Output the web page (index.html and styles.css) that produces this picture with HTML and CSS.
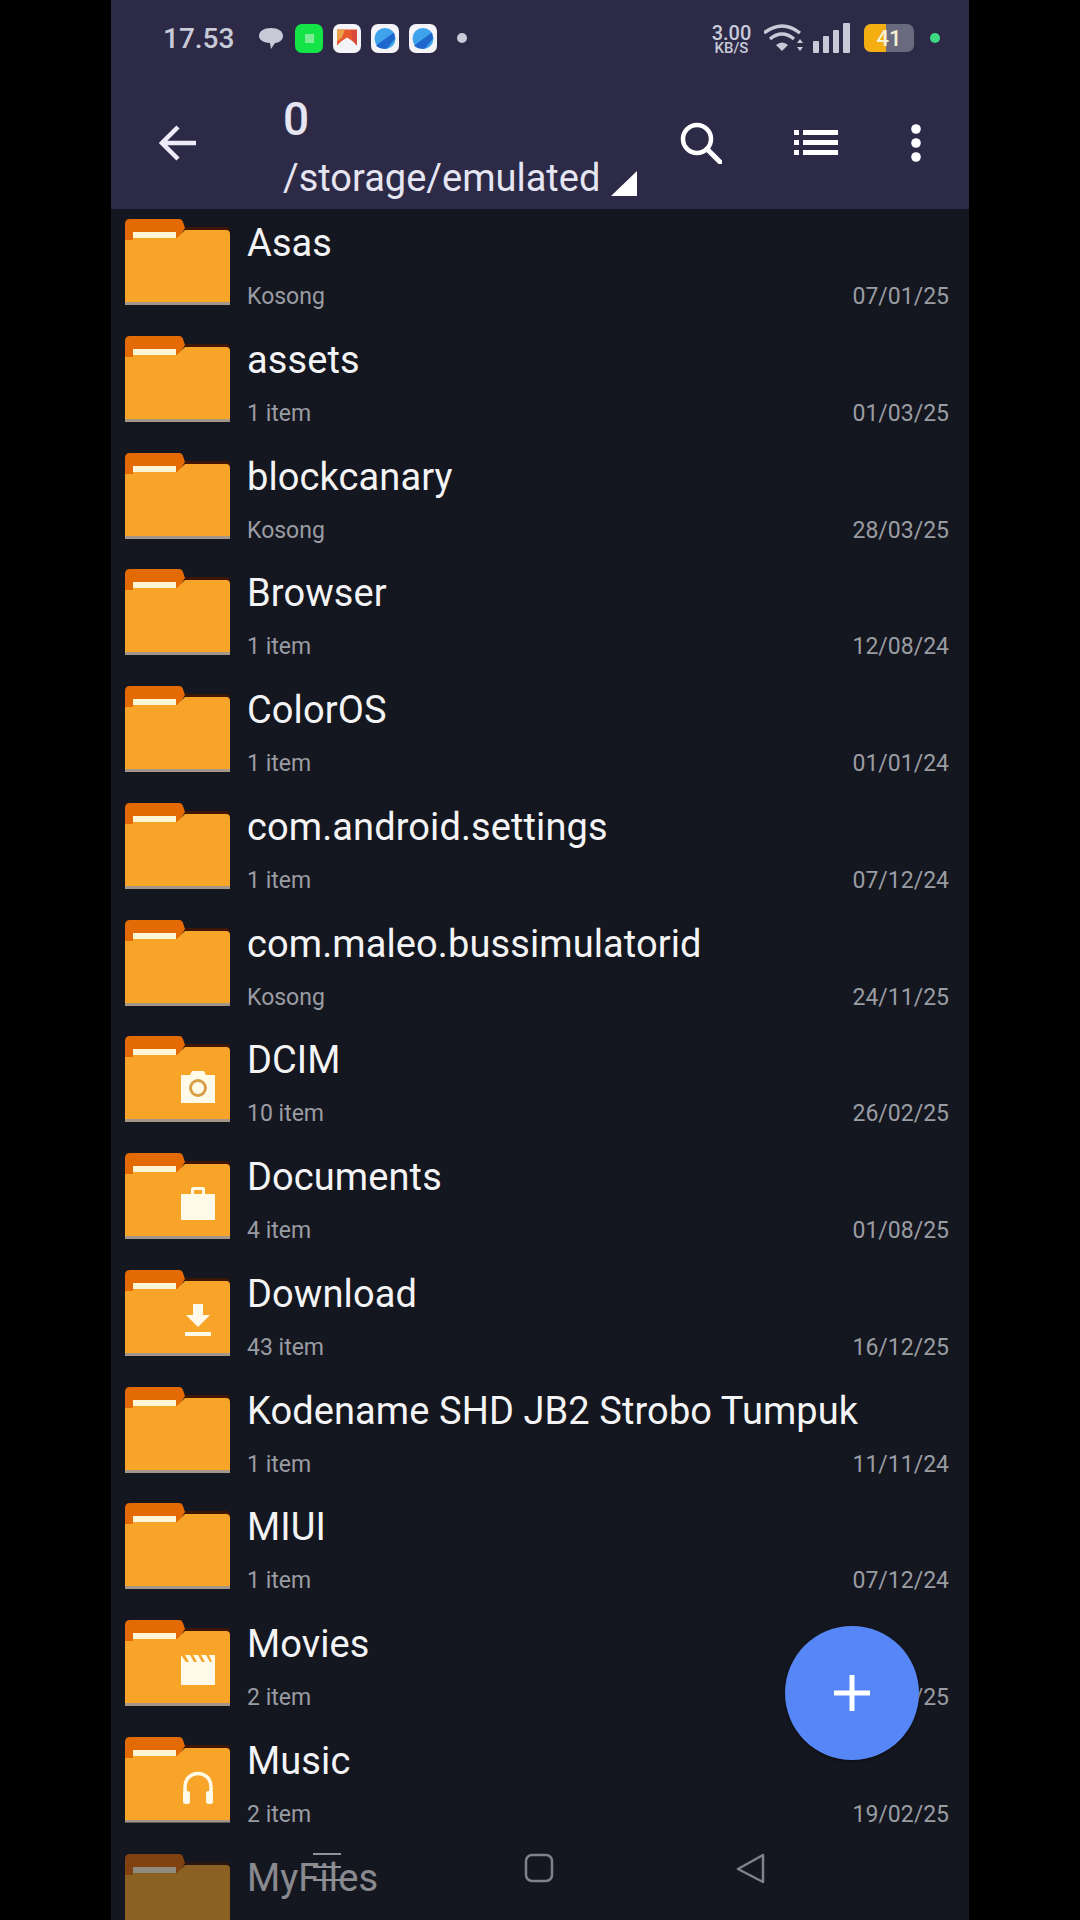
FILE: index.html
```html
<!DOCTYPE html>
<html lang="en">
<head>
    <meta charset="UTF-8">
    <title>Files</title>
    <link rel="stylesheet" href="styles.css">
</head>
<body>

<svg class="defs" width="0" height="0">
    <symbol id="folder" viewBox="0 0 105 87">
        <path d="M60 9 H101 Q105 9 105 13 V16 H60 Z" fill="#3d1606"/>
        <path d="M0 6 Q0 1 5 1 H54 Q57 1 58 4 L60 10 L54 20 V24 H0 Z" fill="#e36a04"/>
        <path d="M8 20 H52 L60 12 H101 Q105 12 105 16 V84 H0 V22 H8 Z" fill="#f8a428"/>
        <rect x="8" y="14" width="43" height="6" fill="#fff6d6"/>
        <rect y="84" width="105" height="3" fill="#a3978a"/>
    </symbol>
</svg>

<div class="phone">
    <div class="status">
        <span class="time">17.53</span>
        <svg class="ic-chat" viewBox="0 0 26 26">
            <path d="M13 3 C20 3 25 6 25 11 C25 15 21 18 17 18 L13 24 L12 18 C6 18 1 15 1 11 C1 6 6 3 13 3 Z" fill="#c9cad8"/>
        </svg>
        <span class="app app-green"><i></i></span>
        <span class="app app-photo">
            <svg viewBox="0 0 28 28"><path d="M4 5 H24 V21 L20 17 L14 13 L8 17 L4 21 Z" fill="#e8582e"/><path d="M4 5 H12 L9 13 L4 17 Z" fill="#eda04a"/><path d="M18 6 H24 V21 L19 15 Z" fill="#d9483a"/></svg>
        </span>
        <span class="app app-blue">
            <svg viewBox="0 0 28 28"><circle cx="14" cy="14" r="10.500" fill="#3ea3ea"/><path d="M5 21 L23 8 L24 14 L16 24 Q9 25 5 21 Z" fill="#1f67cd"/></svg>
        </span>
        <span class="app app-blue">
            <svg viewBox="0 0 28 28"><circle cx="14" cy="14" r="10.500" fill="#3ea3ea"/><path d="M5 21 L23 8 L24 14 L16 24 Q9 25 5 21 Z" fill="#1f67cd"/></svg>
        </span>
        <span class="dot"></span>
        <span class="status-right">
            <span class="speed"><b>3.00</b><small>KB/S</small></span>
            <svg class="ic-wifi" viewBox="0 0 40 30">
                <path d="M0 10 Q18 -4 36 10 M6 16 Q18 6 30 16" fill="none" stroke="#c9cad8" stroke-width="3.400"/>
                <path d="M12 22 Q18 17 24 22 L18 28 Z" fill="#c9cad8"/>
                <path d="M33 20 L36 16 L39 20 Z M33 24 H39 L36 28 Z" fill="#c9cad8"/>
            </svg>
            <svg class="ic-signal" viewBox="0 0 38 30">
                <rect x="0" y="18" width="6" height="12" rx="1" fill="#c9cad8"/>
                <rect x="10" y="13" width="6" height="17" rx="1" fill="#c9cad8"/>
                <rect x="20" y="7" width="6" height="23" rx="1" fill="#c9cad8"/>
                <rect x="30" y="0" width="7" height="30" rx="1" fill="#c9cad8"/>
            </svg>
            <span class="battery"><span class="battery-fill"></span><span class="battery-num">41</span></span>
            <span class="green-dot"></span>
        </span>
    </div>

    <div class="toolbar">
        <svg class="ic-back" viewBox="0 0 38 36">
            <path d="M19 2 L3 18 L19 34 M3 18 H37" fill="none" stroke="#ecebf7" stroke-width="4.500"/>
        </svg>
        <div class="crumb">
            <div class="crumb-name">0</div>
            <div class="crumb-path">/storage/emulated<span class="corner"></span></div>
        </div>
        <svg class="ic-search" viewBox="0 0 42 42">
            <circle cx="17" cy="17" r="14" fill="none" stroke="#fff" stroke-width="4.500"/>
            <path d="M27 27 L40 40" stroke="#fff" stroke-width="5" stroke-linecap="round"/>
        </svg>
        <svg class="ic-list" viewBox="0 0 44 26">
            <path d="M0 0 H5 V5 H0 Z M0 10 H5 V15 H0 Z M0 20 H5 V25 H0 Z M9 0 H44 V5 H9 Z M9 10 H44 V15 H9 Z M9 20 H44 V25 H9 Z" fill="#fff"/>
        </svg>
        <svg class="ic-more" viewBox="0 0 10 38">
            <circle cx="5" cy="5" r="4.800" fill="#fff"/>
            <circle cx="5" cy="19" r="4.800" fill="#fff"/>
            <circle cx="5" cy="33" r="4.800" fill="#fff"/>
        </svg>
    </div>

    <div class="list">
        <div class="row">
            <div class="folder"><svg><use href="#folder"/></svg></div>
            <div class="info"><div class="name">Asas</div><div class="meta"><span>Kosong</span><span>07/01/25</span></div></div>
        </div>
        <div class="row">
            <div class="folder"><svg><use href="#folder"/></svg></div>
            <div class="info"><div class="name">assets</div><div class="meta"><span>1 item</span><span>01/03/25</span></div></div>
        </div>
        <div class="row">
            <div class="folder"><svg><use href="#folder"/></svg></div>
            <div class="info"><div class="name">blockcanary</div><div class="meta"><span>Kosong</span><span>28/03/25</span></div></div>
        </div>
        <div class="row">
            <div class="folder"><svg><use href="#folder"/></svg></div>
            <div class="info"><div class="name">Browser</div><div class="meta"><span>1 item</span><span>12/08/24</span></div></div>
        </div>
        <div class="row">
            <div class="folder"><svg><use href="#folder"/></svg></div>
            <div class="info"><div class="name">ColorOS</div><div class="meta"><span>1 item</span><span>01/01/24</span></div></div>
        </div>
        <div class="row">
            <div class="folder"><svg><use href="#folder"/></svg></div>
            <div class="info"><div class="name">com.android.settings</div><div class="meta"><span>1 item</span><span>07/12/24</span></div></div>
        </div>
        <div class="row">
            <div class="folder"><svg><use href="#folder"/></svg></div>
            <div class="info"><div class="name">com.maleo.bussimulatorid</div><div class="meta"><span>Kosong</span><span>24/11/25</span></div></div>
        </div>
        <div class="row">
            <div class="folder">
                <svg><use href="#folder"/></svg>
                <svg class="badge" viewBox="0 0 36 36">
                    <path d="M1 6 H10 L12 2 H24 L26 6 H35 V34 H1 Z" fill="#fffbe8"/>
                    <circle cx="18" cy="19" r="7.500" fill="none" stroke="#d9a04a" stroke-width="3"/>
                </svg>
            </div>
            <div class="info"><div class="name">DCIM</div><div class="meta"><span>10 item</span><span>26/02/25</span></div></div>
        </div>
        <div class="row">
            <div class="folder">
                <svg><use href="#folder"/></svg>
                <svg class="badge" viewBox="0 0 36 36">
                    <path d="M1 8 H11 V3 Q11 1 13 1 H23 Q25 1 25 3 V8 H35 V34 H1 Z M14 8 H22 V4 H14 Z" fill="#fffbe8" fill-rule="evenodd"/>
                </svg>
            </div>
            <div class="info"><div class="name">Documents</div><div class="meta"><span>4 item</span><span>01/08/25</span></div></div>
        </div>
        <div class="row">
            <div class="folder">
                <svg><use href="#folder"/></svg>
                <svg class="badge" viewBox="0 0 36 36">
                    <path d="M13 1 H23 V12 H30 L18 24 L6 12 H13 Z M5 29 H31 V33 H5 Z" fill="#fffbe8"/>
                </svg>
            </div>
            <div class="info"><div class="name">Download</div><div class="meta"><span>43 item</span><span>16/12/25</span></div></div>
        </div>
        <div class="row">
            <div class="folder"><svg><use href="#folder"/></svg></div>
            <div class="info"><div class="name">Kodename SHD JB2 Strobo Tumpuk</div><div class="meta"><span>1 item</span><span>11/11/24</span></div></div>
        </div>
        <div class="row">
            <div class="folder"><svg><use href="#folder"/></svg></div>
            <div class="info"><div class="name">MIUI</div><div class="meta"><span>1 item</span><span>07/12/24</span></div></div>
        </div>
        <div class="row">
            <div class="folder">
                <svg><use href="#folder"/></svg>
                <svg class="badge" viewBox="0 0 36 36">
                    <path d="M1 2 L6 9 H9 L5 2 H10 L14 9 H17 L13 2 H18 L22 9 H25 L21 2 H26 L30 9 H32 L29 2 H35 V32 H1 Z" fill="#fffbe8"/>
                </svg>
            </div>
            <div class="info"><div class="name">Movies</div><div class="meta"><span>2 item</span><span>12/01/25</span></div></div>
        </div>
        <div class="row">
            <div class="folder">
                <svg><use href="#folder"/></svg>
                <svg class="badge" viewBox="0 0 36 36">
                    <path d="M5 22 V17 C5 -1 31 -1 31 17 V22" fill="none" stroke="#fffbe8" stroke-width="3.500"/>
                    <rect x="3" y="21" width="7" height="13" rx="2.500" fill="#fffbe8"/>
                    <rect x="26" y="21" width="7" height="13" rx="2.500" fill="#fffbe8"/>
                </svg>
            </div>
            <div class="info"><div class="name">Music</div><div class="meta"><span>2 item</span><span>19/02/25</span></div></div>
        </div>
        <div class="row">
            <div class="folder"><svg><use href="#folder"/></svg></div>
            <div class="info"><div class="name">MyFiles</div></div>
        </div>
    </div>

    <div class="navbar">
        <svg class="ic-recents" viewBox="0 0 28 30">
            <path d="M0 1 H28 M0 14 H28 M0 27 H28" stroke="#8f929c" stroke-width="2"/>
        </svg>
        <svg class="ic-home" viewBox="0 0 30 30">
            <rect x="2" y="2" width="26" height="26" rx="6" fill="none" stroke="#7f828c" stroke-width="2.500"/>
        </svg>
        <svg class="ic-prev" viewBox="0 0 30 32">
            <path d="M2 16 L27 2 V29 Z" fill="none" stroke="#7f828c" stroke-width="2.500" stroke-linejoin="round"/>
        </svg>
    </div>

    <div class="fab">
        <svg viewBox="0 0 36 36"><path d="M15.500 0 H20.500 V15.500 H36 V20.500 H20.500 V36 H15.500 V20.500 H0 V15.500 H15.500 Z" fill="#fff"/></svg>
    </div>
</div>

</body>
</html>
```

FILE: styles.css
```css
body {
    margin: 0;
    height: 1920px;
    overflow: hidden;
    background: #000;
    display: flex;
    justify-content: center;
    font-family: Roboto, sans-serif;
}

.defs {
    position: absolute;
}

.phone {
    width: 858px;
    height: 1920px;
    position: relative;
    overflow: hidden;
    display: flex;
    flex-direction: column;
    background: #14171f;
}

.status {
    height: 76px;
    flex: none;
    display: flex;
    align-items: center;
    padding: 0 29px 0 52px;
    background: #2c2a47;
    color: #c9cad8;
}

.time {
    font-size: 28px;
    font-weight: 500;
    width: 95px;
}

.ic-chat {
    width: 26px;
    height: 26px;
    margin-right: 11px;
}

.app {
    width: 28px;
    height: 29px;
    border-radius: 7px;
    margin-right: 10px;
    background: #f3f3f8;
    overflow: hidden;
    display: flex;
}

.app svg {
    width: 100%;
    height: 100%;
}

.app-green {
    background: #14e448;
    align-items: center;
    justify-content: center;
}

.app-green i {
    width: 9px;
    height: 9px;
    background: #7eeb97;
}

.dot {
    width: 10px;
    height: 10px;
    border-radius: 50%;
    background: #c9cad8;
    margin-left: 10px;
}

.status-right {
    margin-left: auto;
    display: flex;
    align-items: center;
}

.speed {
    width: 47px;
    display: flex;
    flex-direction: column;
    align-items: center;
    margin-right: 9px;
    padding-top: 4px;
}

.speed b {
    font-size: 20px;
    font-weight: 500;
    height: 14px;
    line-height: 14px;
    margin-bottom: 2px;
}

.speed small {
    font-size: 15px;
    font-weight: 500;
    height: 12px;
    line-height: 12px;
}

.ic-wifi {
    width: 40px;
    height: 30px;
    margin-right: 9px;
}

.ic-signal {
    width: 38px;
    height: 30px;
    margin-right: 13px;
}

.battery {
    width: 50px;
    height: 28px;
    border-radius: 7px;
    background: #6a6a7e;
    position: relative;
    overflow: hidden;
    display: flex;
    align-items: center;
    justify-content: center;
    margin-right: 16px;
}

.battery-fill {
    position: absolute;
    left: 0;
    top: 0;
    bottom: 0;
    width: 44%;
    background: #f4ae12;
}

.battery-num {
    position: relative;
    font-size: 22px;
    font-weight: 500;
    color: #f4f0d4;
}

.green-dot {
    width: 10px;
    height: 10px;
    border-radius: 50%;
    background: #3fd884;
}

.toolbar {
    height: 133px;
    flex: none;
    display: flex;
    align-items: flex-start;
    background: #2c2a47;
    color: #e6e5f2;
    position: relative;
    z-index: 2;
}

.ic-back {
    width: 38px;
    height: 36px;
    margin: 49px 0 0 48px;
}

.crumb {
    width: 397px;
    margin-left: 86px;
    padding-top: 18px;
}

.crumb-name {
    font-size: 46px;
    font-weight: 500;
    line-height: 50px;
}

.crumb-path {
    font-size: 38px;
    line-height: 44px;
    margin-top: 12px;
    position: relative;
}

.corner {
    position: absolute;
    left: 328px;
    top: 15px;
    width: 0;
    height: 0;
    border-style: solid;
    border-width: 0 0 25px 26px;
    border-color: transparent transparent #fff transparent;
}

.ic-search {
    width: 42px;
    height: 42px;
    margin: 46px 0 0 0;
}

.ic-list {
    width: 44px;
    height: 26px;
    margin: 54px 0 0 72px;
}

.ic-more {
    width: 10px;
    height: 38px;
    margin: 48px 0 0 73px;
}

.list {
    flex: 1;
    min-height: 0;
    overflow: hidden;
    margin-top: -4px;
}

.row {
    height: 116.750px;
    box-sizing: border-box;
    padding: 14px 20px 0 14px;
    display: flex;
}

.folder {
    width: 105px;
    height: 87px;
    flex: none;
    position: relative;
    margin-top: -1px;
}

.folder > svg {
    width: 105px;
    height: 87px;
    display: block;
}

.folder > .badge {
    position: absolute;
    left: 55px;
    top: 34px;
    width: 36px;
    height: 36px;
}

.info {
    flex: 1;
    margin-left: 17px;
    min-width: 0;
}

.name {
    font-size: 38px;
    line-height: 44px;
    letter-spacing: 0.1px;
    margin-top: 2px;
    color: #f4f4f6;
}

.meta {
    display: flex;
    justify-content: space-between;
    font-size: 23px;
    line-height: 26px;
    margin-top: 19px;
    color: #9a9ca3;
}

.navbar {
    position: absolute;
    left: 0;
    right: 0;
    bottom: 0;
    height: 98px;
    background: rgba(20, 23, 31, 0.48);
    display: flex;
    align-items: flex-start;
    z-index: 3;
}

.ic-recents {
    width: 28px;
    height: 30px;
    margin: 31px 0 0 202px;
}

.ic-home {
    width: 30px;
    height: 30px;
    margin: 31px 0 0 183px;
}

.ic-prev {
    width: 30px;
    height: 32px;
    margin: 31px 0 0 182px;
}

.fab {
    position: absolute;
    left: 674px;
    top: 1626px;
    width: 134px;
    height: 134px;
    border-radius: 50%;
    background: #5787f7;
    box-shadow: 0 1px 3px rgba(0, 0, 0, 0.5);
    display: flex;
    align-items: center;
    justify-content: center;
    z-index: 4;
}

.fab svg {
    width: 36px;
    height: 36px;
}
```
